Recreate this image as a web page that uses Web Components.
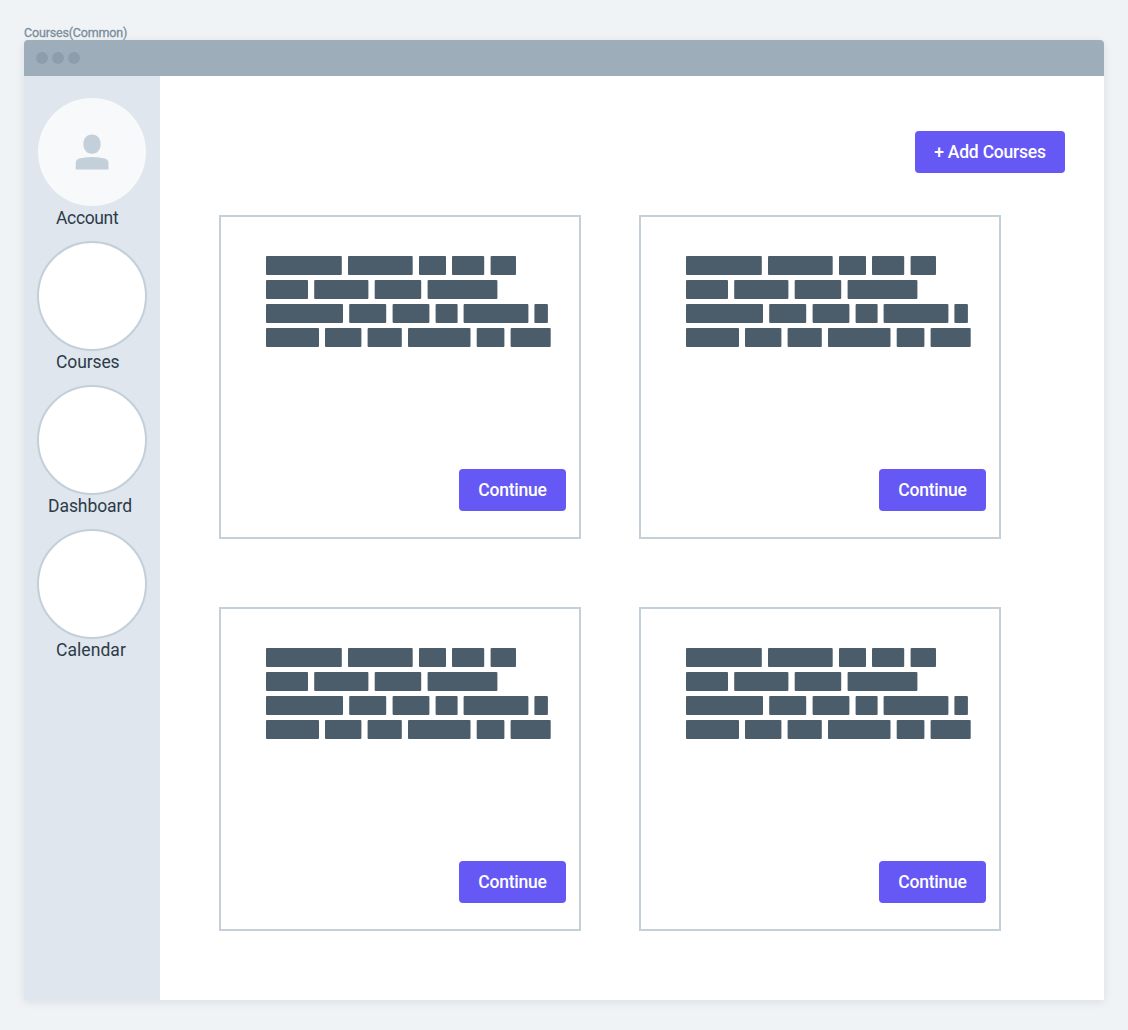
<!DOCTYPE html>
<html lang="en">
<head>
<meta charset="utf-8">
<title>Courses</title>
<style>
body{margin:0;background:#eff3f6;font-family:Roboto,"Liberation Sans",sans-serif}
</style>
</head>
<body>
<courses-page></courses-page>
<script>
const define=(name,html,setup)=>customElements.define(name,class extends HTMLElement{
  connectedCallback(){
    if(this.shadowRoot)return;
    this.attachShadow({mode:'open'}).innerHTML=html;
    if(setup)setup(this,this.shadowRoot);
  }
});

define('text-blocks',`<style>:host{display:block;width:285px;height:91px}svg{display:block;fill:#4b5c6b}</style>
<svg width="285" height="91" viewBox="0 0 285 91"></svg>`,(el,root)=>{
  const rows=[
    [[0,75.8],[82,64.7],[153,27],[186,32.2],[224.6,25.4]],
    [[0,42],[48.2,54.2],[108.7,46.5],[161.6,69.8]],
    [[0,77],[83.2,37],[126.6,36.8],[169.6,22],[197.6,64.8],[268.4,13.5]],
    [[0,53],[59,36.4],[101.6,34.2],[142,62.5],[210.7,27.7],[244.6,40.1]]
  ];
  root.querySelector('svg').innerHTML=rows.map((row,i)=>row.map(([x,w])=>`<rect x="${x}" y="${i*24}" width="${w}" height="19" rx="1"/>`).join('')).join('');
});

define('action-button',`<style>
:host{display:block;flex:none}
button{display:flex;align-items:center;justify-content:center;width:100%;height:42px;margin:0;padding:0;border:0;border-radius:4px;background:#6558f5;color:#fff;font:500 17.5px/24px Roboto,sans-serif;letter-spacing:-.22px;white-space:nowrap}
</style><button><span><slot></slot></span></button>`);

define('course-card',`<style>
:host{display:flex;flex-direction:column;justify-content:space-between;box-sizing:border-box;width:362px;height:324px;border:2px solid #c3cfd9;background:#fff;padding:39px 13px 26px 45px}
action-button{width:107px;align-self:flex-end}
</style><text-blocks></text-blocks><action-button>Continue</action-button>`);

define('nav-item',`<style>
:host{display:block;height:144px}
.circle{box-sizing:border-box;width:110px;height:110px;margin-left:13px;border:2px solid #c3cfd9;border-radius:50%;background:#fff}
:host([avatar]) .circle{border-color:transparent;background:#f8f9fb;background-clip:padding-box;border-width:1px}
svg{display:none;width:108px;height:108px;fill:#c3cfd9}
:host([avatar]) svg{display:block}
.label{display:block;width:max-content;margin-left:var(--indent,32px);font-size:17.5px;line-height:24px;color:#2d3b48;margin-top:-1px;letter-spacing:var(--track,0)}
</style><div class="circle"><svg viewBox="38 98 108 108"><path d="M92 134.500C97.400 134.500 100.600 138.400 100.600 144.100C100.600 149.800 97.400 153.800 92 153.800C86.600 153.800 83.400 149.800 83.400 144.100C83.400 138.400 86.600 134.500 92 134.500Z"/><path d="M75.7 169.5V163.5Q75.7 159.7 79.2 158.5Q84.5 157 92 157Q99.500 157 104.800 158.500Q108.500 159.700 108.500 163.500V169.500Z"/></svg></div><span class="label"><slot></slot></span>`);

define('side-nav',`<style>:host{display:block;box-sizing:border-box;width:136px;flex:none;background:#dfe6ed;padding-top:21px}</style><slot></slot>`);

define('browser-window',`<style>
:host{display:flex;flex-direction:column;width:1080px;height:960px;border-radius:4px 4px 0 0;background:#fff;box-shadow:0 2px 8px rgba(40,50,60,.1)}
header{display:flex;align-items:center;gap:4px;height:36px;box-sizing:border-box;padding-left:12px;background:#9eadba;border-radius:4px 4px 0 0}
i{width:12px;height:12px;border-radius:50%;background:#8d9dab}
.body{display:flex;flex:1}
</style><header><i></i><i></i><i></i></header><div class="body"><slot></slot></div>`);

define('courses-page',`<style>
:host{display:block;box-sizing:border-box;height:1030px;padding:25px 24px 0}
.title{height:15px;font-size:12.5px;line-height:15px;color:#7c8d9b;letter-spacing:-.17px}
.title span{display:inline-block;-webkit-text-stroke:.3px}
main{display:flex;flex-direction:column;flex:1;padding:55px 39px 0 59px}
main>action-button{width:150px;align-self:flex-end}
.grid{display:grid;grid-template-columns:362px 362px;gap:68px 58px;margin-top:42px}
</style>
<div class="title"><span>Courses(Common)</span></div>
<browser-window>
<side-nav>
<nav-item avatar style="--track:-.35px">Account</nav-item>
<nav-item style="--track:-.12px">Courses</nav-item>
<nav-item style="--indent:24px;--track:-.06px">Dashboard</nav-item>
<nav-item style="--track:.06px">Calendar</nav-item>
</side-nav>
<main>
<action-button>+ Add Courses</action-button>
<div class="grid"><course-card></course-card><course-card></course-card><course-card></course-card><course-card></course-card></div>
</main>
</browser-window>`);
</script>
</body>
</html>
